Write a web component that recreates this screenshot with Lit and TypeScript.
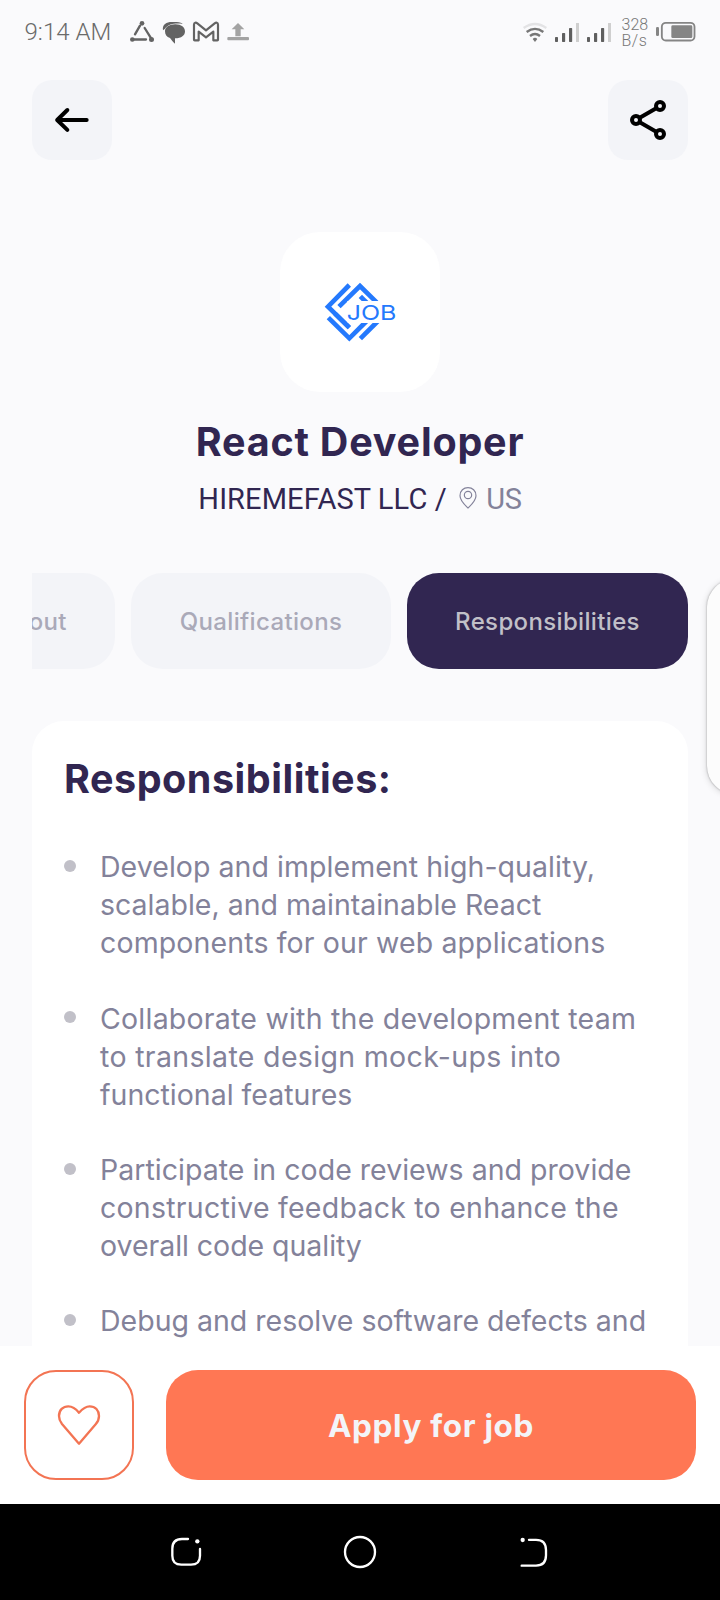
import { LitElement, html, css } from "lit";
import { customElement, property } from "lit/decorators.js";

type Line = [text: string, tracking: number];

const DUTIES: Line[][] = [
  [
    ["Develop and implement high-quality,", 0.05],
    ["scalable, and maintainable React", 0],
    ["components for our web applications", 0.13],
  ],
  [
    ["Collaborate with the development team", 0.23],
    ["to translate design mock-ups into", 0.34],
    ["functional features", 0],
  ],
  [
    ["Participate in code reviews and provide", 0.02],
    ["constructive feedback to enhance the", 0.25],
    ["overall code quality", -0.04],
  ],
  [["Debug and resolve software defects and", 0]],
];

@customElement("status-bar")
class StatusBar extends LitElement {
  static styles = css`
    :host {
      display: flex;
      height: 64px;
      box-sizing: border-box;
      padding: 18px 20px 0 24.500px;
      font-family: Roboto, sans-serif;
    }
    .time {
      width: 103.500px;
      font-size: 24px;
      font-weight: 300;
      line-height: 29px;
      letter-spacing: 0.050px;
      color: #6a6a6a;
      white-space: nowrap;
    }
    .spacer {
      flex: 1;
    }
    svg {
      display: block;
      flex: none;
    }
    .rate {
      width: 30px;
      font-size: 16px;
      font-weight: 300;
      line-height: 16px;
      padding-left: 1.500px;
      box-sizing: border-box;
      margin-top: -1.500px;
      color: #777;
      white-space: nowrap;
    }
    .unit {
      letter-spacing: 0.500px;
    }
  `;
  render() {
    return html`
      <div class="time">9:14 AM</div>
      <svg width="124" height="28" viewBox="384 54 372 84" fill="none">
        <g stroke="#636363" stroke-width="7" stroke-linecap="round">
          <path d="M405 103L420 77M434 84L452 113M402 118.500H438" />
        </g>
        <g fill="#636363">
          <circle cx="426" cy="70" r="7" />
          <circle cx="397" cy="118.500" r="7" />
          <circle cx="454.500" cy="118.500" r="7.500" />
          <path d="M489 91C486 73 500 66 515 66H530C540 66 546 69 548 72C530 69 506 70 495 86Z" />
          <path d="M526 73C544 73 555 82 555 94C555 107 545 115 525 115V131C518 126 514 119 510 114C500 111 495 104 495 94C495 82 507 73 526 73Z" />
        </g>
        <path
          d="M582 119V74C582 67 588 67 592 70L618 91L644 70C648 67 654 67 654 74V119Q654 121 652 121H640V95L618 112L596 95V121H584Q582 121 582 119Z"
          stroke="#636363" stroke-width="6.500" stroke-linejoin="round" />
        <g fill="#a3a3a3">
          <rect x="682" y="111" width="65" height="9.500" rx="3" />
          <path d="M714 69L733 88H722V109H706V88H695Z" />
        </g>
      </svg>
      <div class="spacer"></div>
      <svg width="100" height="30" viewBox="60 54 300 90" fill="none">
        <path d="M71 84Q105 60 139 84" stroke="#e3e3e5" stroke-width="7" />
        <path d="M80 96Q105 77 130 96" stroke="#777" stroke-width="7" />
        <path d="M90 108Q105 96 120 108" stroke="#777" stroke-width="7" />
        <path d="M98 117Q105 110 112 117L105 126Z" fill="#777" />
        ${[165, 261].map(
          (x) => html`<svg x=${x} y="69" width="72" height="57" viewBox="0 0 72 57">
            <rect y="42" width="9" height="15" rx="2" fill="#5f5f5f" />
            <rect x="21" y="30" width="9.500" height="27" rx="2" fill="#5f5f5f" />
            <rect x="42" y="15" width="9.500" height="42" rx="2" fill="#5f5f5f" />
            <rect x="63" width="9" height="57" rx="1" fill="#cfcfcf" />
          </svg>`
        )}
      </svg>
      <div class="rate">
        <div>328</div>
        <div class="unit">B/s</div>
      </div>
      <svg width="50" height="30" viewBox="450 54 150 90" fill="none">
        <rect x="468" y="81" width="9" height="27" rx="4" fill="#858585" />
        <rect x="485.500" y="68.500" width="98" height="53" rx="12" stroke="#858585" stroke-width="5.500" />
        <rect x="514" y="76" width="63" height="38" rx="4" fill="#858585" />
      </svg>
    `;
  }
}

@customElement("duty-item")
class DutyItem extends LitElement {
  @property({ attribute: false }) lines: Line[] = [];
  static styles = css`
    :host {
      display: flex;
      gap: 24px;
    }
    .dot {
      flex: none;
      width: 12px;
      height: 12px;
      margin-top: 11.700px;
      border-radius: 50%;
      background: #c1c0c8;
    }
    .line {
      font-size: 28.500px;
      line-height: 38px;
      color: #83829a;
      white-space: nowrap;
    }
  `;
  render() {
    return html`
      <div class="dot"></div>
      <div>
        ${this.lines.map(
          ([text, tracking]) => html`<div class="line" style="letter-spacing:${tracking}px">${text}</div>`
        )}
      </div>
    `;
  }
}

@customElement("app-root")
class AppRoot extends LitElement {
  static styles = css`
    :host {
      display: flex;
      flex-direction: column;
      position: relative;
      width: 720px;
      height: 1600px;
      overflow: hidden;
      background: #fafafc;
      font-family: Inter, sans-serif;
      color: #312651;
    }
    * {
      box-sizing: border-box;
    }
    svg {
      display: block;
    }
    .content {
      flex: 1;
      min-height: 0;
      overflow: hidden;
      padding: 16px 32px 0;
      display: flex;
      flex-direction: column;
    }
    .header {
      display: flex;
      justify-content: space-between;
    }
    .icon-button {
      width: 80px;
      height: 80px;
      border-radius: 20px;
      background: #f3f4f8;
    }
    .logo {
      align-self: center;
      width: 160px;
      height: 160px;
      margin-top: 72px;
      border-radius: 40px;
      background: #fff;
    }
    .logo-text {
      font: 400 62px Inter, sans-serif;
      fill: #2479fd;
    }
    .title {
      margin: 25.500px 0 0;
      font-size: 39.500px;
      line-height: 48px;
      font-weight: 650;
      letter-spacing: 0.800px;
      text-align: center;
      white-space: nowrap;
    }
    .company {
      display: flex;
      justify-content: center;
      margin-top: 15.500px;
      font: 400 29px/36px Roboto, sans-serif;
      white-space: nowrap;
    }
    .name {
      letter-spacing: 0.100px;
    }
    .pin {
      margin: 4px 8px 0 11.500px;
    }
    .place {
      color: #83829a;
      letter-spacing: -0.300px;
    }
    .tabs {
      display: flex;
      flex: none;
      justify-content: flex-end;
      gap: 16px;
      margin-top: 56px;
      overflow: hidden;
    }
    .tab {
      flex: none;
      display: flex;
      align-items: center;
      justify-content: center;
      height: 96px;
      border-radius: 32px;
      background: #f3f4f8;
      color: #aaa9b8;
      font-size: 24px;
      font-weight: 500;
      letter-spacing: 0.350px;
    }
    .about {
      width: 167px;
    }
    .qualifications {
      width: 260px;
    }
    .responsibilities {
      width: 281px;
      background: #312651;
      color: #c1c0c8;
    }
    .card {
      flex: 1 0 auto;
      margin-top: 52px;
      padding: 33.500px 32px 0;
      border-radius: 32px 32px 0 0;
      background: #fff;
    }
    .card-title {
      margin: 0 0 45.800px;
      font-size: 39.500px;
      line-height: 48px;
      font-weight: 650;
      letter-spacing: 0.520px;
    }
    .list {
      display: flex;
      flex-direction: column;
      gap: 37.300px;
    }
    .footer {
      flex: none;
      display: flex;
      gap: 32px;
      height: 158px;
      padding: 24px;
      background: #fff;
    }
    .like {
      width: 110px;
      height: 110px;
      border: 2px solid #f37453;
      border-radius: 32px;
    }
    .apply {
      flex: 1;
      display: flex;
      align-items: center;
      justify-content: center;
      border-radius: 32px;
      background: #ff7754;
      color: #f3f4f8;
      font-size: 31.500px;
      font-weight: 650;
      letter-spacing: 0.650px;
    }
    .nav {
      flex: none;
      display: flex;
      align-items: center;
      justify-content: center;
      gap: 134px;
      height: 96px;
      background: #000;
    }
    .edge {
      position: absolute;
      left: 707px;
      top: 579px;
      width: 60px;
      height: 215px;
      border-radius: 28px;
      background: #fcfcfc;
      box-shadow: 0 0 2px rgba(0, 0, 0, 0.35), 0 1px 7px rgba(0, 0, 0, 0.16);
    }
  `;
  render() {
    return html`
      <status-bar></status-bar>
      <div class="content">
        <div class="header">
          <div class="icon-button">
            <svg width="80" height="80" viewBox="96 240 240 240" fill="none" stroke="#000" stroke-width="12" stroke-linecap="round" stroke-linejoin="round">
              <path d="M260 360H172M202 330L171.500 360L202 389.500" />
            </svg>
          </div>
          <div class="icon-button">
            <svg width="80" height="80" viewBox="324 240 240 240" fill="none" stroke="#000" stroke-width="12">
              <path d="M418 354L470 324M418 366L470 396" />
              <circle cx="480" cy="318" r="12" />
              <circle cx="408" cy="360" r="12" />
              <circle cx="480" cy="402" r="12" />
            </svg>
          </div>
        </div>
        <div class="logo">
          <svg width="160" height="160" viewBox="60 36 480 480" fill="none" stroke="#2479fd" stroke-width="14">
            <path d="M268 195L204 260L268 323" />
            <path d="M237 260L300 198L350 247" />
            <path d="M205 293L268 355L320 303" />
            <path d="M301 356L354 303" />
            <path d="M301 229L320 248" />
            <path d="M262 243H412V309H262Z" fill="#fff" stroke="none" />
            <path d="M225 281L268 323" />
            <text class="logo-text" x="260" y="299" textLength="149" lengthAdjust="spacingAndGlyphs" stroke="none">JOB</text>
          </svg>
        </div>
        <h1 class="title">React Developer</h1>
        <div class="company">
          <span class="name">HIREMEFAST LLC /</span>
          <svg class="pin" width="20" height="26" viewBox="834 228 60 78" fill="none" stroke="#83829a" stroke-width="3.500">
            <path d="M864 297C855 288 840 275 840 260C840 245 851 236 864 236C877 236 888 245 888 260C888 275 873 288 864 297Z" />
            <circle cx="864" cy="258" r="11" />
          </svg>
          <span class="place">US</span>
        </div>
        <div class="tabs">
          <div class="tab about">About</div>
          <div class="tab qualifications">Qualifications</div>
          <div class="tab responsibilities">Responsibilities</div>
        </div>
        <div class="card">
          <h2 class="card-title">Responsibilities:</h2>
          <div class="list">${DUTIES.map((lines) => html`<duty-item .lines=${lines}></duty-item>`)}</div>
        </div>
      </div>
      <div class="footer">
        <div class="like">
          <svg width="106" height="106" viewBox="78 276 318 318" fill="none" stroke="#f37453" stroke-width="7" stroke-linejoin="round">
            <path d="M237 491L186 432C179 423 177 415 177 408C177 390 189 379 205 379C219 379 229 388 237 398C246 388 256 379 269 379C286 379 297 391 297 408C297 417 295 424 287 433Z" />
          </svg>
        </div>
        <div class="apply">Apply for job</div>
      </div>
      <div class="nav">
        <svg width="40" height="40" viewBox="498 756 120 120" fill="none" stroke="#fff" stroke-width="7" stroke-linecap="round">
          <path d="M564 777H546Q517 777 517 806V827Q517 854 544 854H573Q600 854 600 827V807" />
          <circle cx="592" cy="784" r="6.500" fill="#fff" stroke="none" />
        </svg>
        <svg width="40" height="40" viewBox="1020 756 120 120" fill="none" stroke="#fff" stroke-width="7">
          <circle cx="1080" cy="816" r="45" />
        </svg>
        <svg width="40" height="40" viewBox="342 756 120 120" fill="none" stroke="#fff" stroke-width="7" stroke-linecap="round">
          <path d="M387 779.500H408Q438 779.500 438 810V826Q438 857 408 857H365" />
          <circle cx="368" cy="780" r="6.500" fill="#fff" stroke="none" />
        </svg>
      </div>
      <div class="edge"></div>
    `;
  }
}
